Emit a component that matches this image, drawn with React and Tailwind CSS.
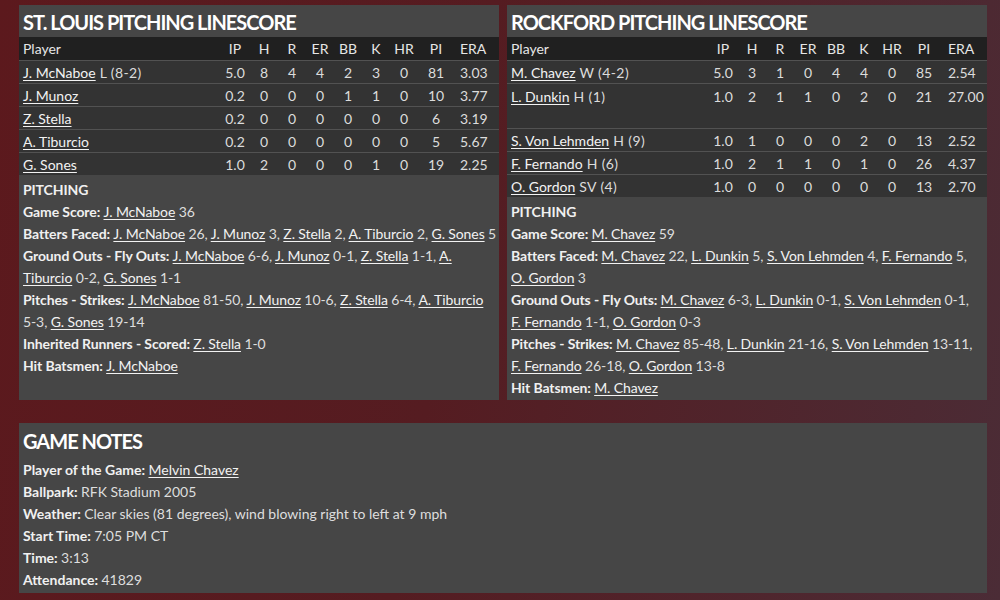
import React from "react";

const FONT = { fontFamily: "Lato, 'Open Sans', sans-serif" };

const leftRows = [
  ["J. McNaboe", "L (8-2)", "5.0", "8", "4", "4", "2", "3", "0", "81", "3.03"],
  ["J. Munoz", "", "0.2", "0", "0", "0", "1", "1", "0", "10", "3.77"],
  ["Z. Stella", "", "0.2", "0", "0", "0", "0", "0", "0", "6", "3.19"],
  ["A. Tiburcio", "", "0.2", "0", "0", "0", "0", "0", "0", "5", "5.67"],
  ["G. Sones", "", "1.0", "2", "0", "0", "0", "1", "0", "19", "2.25"],
];

const rightRows = [
  ["M. Chavez", "W (4-2)", "5.0", "3", "1", "0", "4", "4", "0", "85", "2.54"],
  ["L. Dunkin", "H (1)", "1.0", "2", "1", "1", "0", "2", "0", "21", "27.00", true],
  ["S. Von Lehmden", "H (9)", "1.0", "1", "0", "0", "0", "2", "0", "13", "2.52"],
  ["F. Fernando", "H (6)", "1.0", "2", "1", "1", "0", "1", "0", "26", "4.37"],
  ["O. Gordon", "SV (4)", "1.0", "0", "0", "0", "0", "0", "0", "13", "2.70"],
];

// third item = name may break across lines
const leftNotes = [
  ["Game Score:", [["J. McNaboe", " 36"]]],
  ["Batters Faced:", [["J. McNaboe", " 26, "], ["J. Munoz", " 3, "], ["Z. Stella", " 2, "], ["A. Tiburcio", " 2, "], ["G. Sones", " 5"]]],
  ["Ground Outs - Fly Outs:", [["J. McNaboe", " 6-6, "], ["J. Munoz", " 0-1, "], ["Z. Stella", " 1-1, "], ["A. Tiburcio", " 0-2, ", true], ["G. Sones", " 1-1"]]],
  ["Pitches - Strikes:", [["J. McNaboe", " 81-50, "], ["J. Munoz", " 10-6, "], ["Z. Stella", " 6-4, "], ["A. Tiburcio", " 5-3, "], ["G. Sones", " 19-14"]]],
  ["Inherited Runners - Scored:", [["Z. Stella", " 1-0"]]],
  ["Hit Batsmen:", [["J. McNaboe", ""]]],
];

const rightNotes = [
  ["Game Score:", [["M. Chavez", " 59"]]],
  ["Batters Faced:", [["M. Chavez", " 22, "], ["L. Dunkin", " 5, "], ["S. Von Lehmden", " 4, "], ["F. Fernando", " 5, "], ["O. Gordon", " 3"]]],
  ["Ground Outs - Fly Outs:", [["M. Chavez", " 6-3, "], ["L. Dunkin", " 0-1, "], ["S. Von Lehmden", " 0-1, "], ["F. Fernando", " 1-1, "], ["O. Gordon", " 0-3"]]],
  ["Pitches - Strikes:", [["M. Chavez", " 85-48, "], ["L. Dunkin", " 21-16, "], ["S. Von Lehmden", " 13-11, "], ["F. Fernando", " 26-18, "], ["O. Gordon", " 13-8"]]],
  ["Hit Batsmen:", [["M. Chavez", ""]]],
];

const cols = "grid grid-cols-[201px_30px_28px_28px_28px_28px_28px_28px_36px_45px]";

function Name({ children, wrap }) {
  return (
    <span className={`${wrap ? "" : "whitespace-nowrap"} underline underline-offset-[2px] decoration-1 text-[#f2f2f2]`}>
      {children}
    </span>
  );
}

function Linescore({ title, rows, notes }) {
  return (
    <div className="w-[480px] h-[395px] bg-[#464646] flex flex-col">
      <div className="h-[32px] px-1 pt-[1px] text-[20px] font-bold leading-[32px] text-white tracking-[-1px]">{title}</div>
      <div className={`${cols} h-[23px] items-center bg-[#202020] text-[14px] text-[#e6e6e6]`}>
        <div className="pl-1">Player</div>
        {["IP", "H", "R", "ER", "BB", "K", "HR", "PI"].map((h) => (
          <div key={h} className="text-center">{h}</div>
        ))}
        <div className="pl-[6px]">ERA</div>
      </div>
      {rows.map((r) => (
        <div
          key={r[0]}
          className={`${cols} ${r[11] ? "h-[45px] items-start pt-[2px]" : "h-[23px] items-center"} bg-[#333333] border-t border-[#525252] text-[14px] text-[#dcdcdc]`}
        >
          <div className="pl-1 whitespace-nowrap">
            <Name>{r[0]}</Name>
            {r[1] && <span className="tracking-[0.4px]"> {r[1]}</span>}
          </div>
          {r.slice(2, 10).map((v, i) => (
            <div key={i} className="text-center">{v}</div>
          ))}
          <div className="pl-[6px]">{r[10]}</div>
        </div>
      ))}
      <div className="pl-1 pt-1 text-[14px] leading-[22px] tracking-[-0.1px] text-[#dedede]">
        <div className="font-bold text-[#f0f0f0]">PITCHING</div>
        {notes.map(([label, items]) => (
          <div key={label}>
            <span className="font-bold text-[#f0f0f0]">{label} </span>
            {items.map(([n, after, wrap]) => (
              <React.Fragment key={n}>
                <Name wrap={wrap}>{n}</Name>
                {after}
              </React.Fragment>
            ))}
          </div>
        ))}
      </div>
    </div>
  );
}

export default function App() {
  return (
    <div
      style={FONT}
      className="w-[1000px] h-[600px] overflow-hidden bg-[linear-gradient(100deg,#5c191d_0%,#551c21_45%,#4b2c36_100%)] pt-[5px] pl-[19px]"
    >
      <div className="flex gap-2">
        <Linescore title="ST. LOUIS PITCHING LINESCORE" rows={leftRows} notes={leftNotes} />
        <Linescore title="ROCKFORD PITCHING LINESCORE" rows={rightRows} notes={rightNotes} />
      </div>
      <div className="mt-[23px] w-[968px] h-[170px] bg-[#464646] px-1 text-[14px] leading-[22px] text-[#dedede]">
        <div className="h-[36px] pt-[2px] text-[20px] font-bold leading-[32px] text-white tracking-[-1px]">GAME NOTES</div>
        <div><span className="font-bold text-[#f0f0f0]">Player of the Game: </span><Name>Melvin Chavez</Name></div>
        <div><span className="font-bold text-[#f0f0f0]">Ballpark: </span>RFK Stadium 2005</div>
        <div><span className="font-bold text-[#f0f0f0]">Weather: </span>Clear skies (81 degrees), wind blowing right to left at 9 mph</div>
        <div><span className="font-bold text-[#f0f0f0]">Start Time: </span>7:05 PM CT</div>
        <div><span className="font-bold text-[#f0f0f0]">Time: </span>3:13</div>
        <div><span className="font-bold text-[#f0f0f0]">Attendance: </span>41829</div>
      </div>
    </div>
  );
}
